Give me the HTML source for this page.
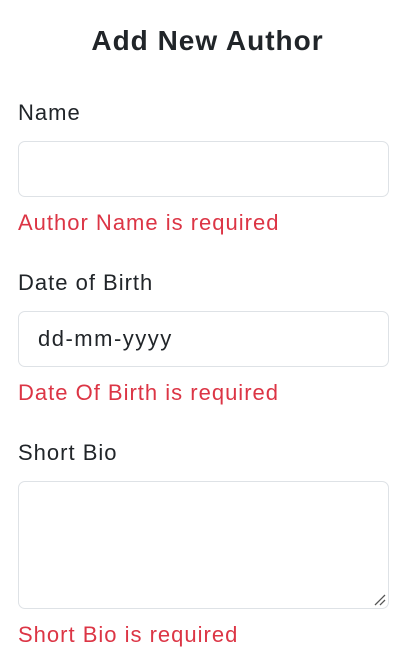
<!DOCTYPE html>
<html><head><style>
body{margin:0;width:415px;height:658px;background:#fff;font-family:"Liberation Sans",sans-serif;color:#212529;position:relative;overflow:hidden}
.a{position:absolute;left:18px;white-space:nowrap;font-size:22px;line-height:24px;letter-spacing:1px}
h1{position:absolute;top:26px;left:0;width:415px;text-align:center;margin:0;font-size:28px;font-weight:bold;line-height:30px;letter-spacing:1px}
.in{position:absolute;left:18px;width:369px;border:1px solid #dee2e6;border-radius:7px;background:#fff}
.e{color:#dc3545}
</style></head><body>
<h1>Add New Author</h1>
<div class="a" style="top:101px">Name</div>
<div class="in" style="top:141px;height:54px"></div>
<div class="a e" style="top:211px">Author Name is required</div>
<div class="a" style="top:271px">Date of Birth</div>
<div class="in" style="top:311px;height:54px"><span style="position:absolute;left:19px;top:15px;font-size:22px;line-height:24px;letter-spacing:1.5px">dd-mm-yyyy</span></div>
<div class="a e" style="top:381px">Date Of Birth is required</div>
<div class="a" style="top:441px">Short Bio</div>
<div class="in" style="top:481px;height:126px">
<svg style="position:absolute;right:2px;bottom:2px" width="12" height="12"><path d="M1 11L11 1M6 11L11 6" stroke="#555" stroke-width="1.3"/></svg></div>
<div class="a e" style="top:623px">Short Bio is required</div>
</body></html>
